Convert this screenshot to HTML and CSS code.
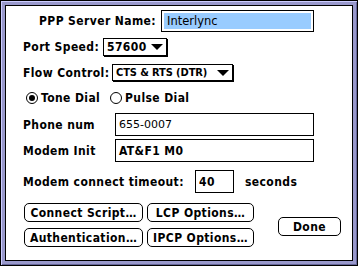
FILE: index.html
```html
<!DOCTYPE html>
<html lang="en">
<head>
    <meta charset="UTF-8">
    <title>PPP Configuration</title>
    <link rel="stylesheet" href="styles.css">
</head>
<body>
    <div class="dialog">
        <div class="panel">
            <!-- Server name -->
            <div class="row server-row">
                <span class="label server-label">PPP Server Name:</span>
                <div class="field server-field"><span class="sel">Interlync</span></div>
            </div>

            <!-- Popups -->
            <div class="row speed-row">
                <span class="label speed-label">Port Speed:</span>
                <div class="popup speed-popup"><span>57600</span><span class="arrow"></span></div>
            </div>
            <div class="row flow-row">
                <span class="label flow-label">Flow Control:</span>
                <div class="popup flow-popup"><span class="flow-text">CTS &amp; RTS (DTR)</span><span class="arrow"></span></div>
            </div>

            <!-- Dial mode -->
            <div class="row radio-row">
                <div class="radio tone"><span class="dot on"></span><span>Tone Dial</span></div>
                <div class="radio"><span class="dot"></span><span>Pulse Dial</span></div>
            </div>

            <!-- Text fields -->
            <div class="row phone-row">
                <span class="label field-label">Phone num</span>
                <div class="field wide-field plain">655-0007</div>
            </div>
            <div class="row init-row">
                <span class="label field-label">Modem Init</span>
                <div class="field wide-field">AT&amp;F1 M0</div>
            </div>
            <div class="row timeout-row">
                <span class="label timeout-label">Modem connect timeout:</span>
                <div class="field timeout-field">40</div>
                <span class="label seconds">seconds</span>
            </div>

            <!-- Buttons -->
            <div class="button-area">
                <div class="button-grid">
                    <div class="btn btn-left">Connect Script…</div>
                    <div class="btn btn-right">LCP Options…</div>
                    <div class="btn btn-left">Authentication…</div>
                    <div class="btn btn-right">IPCP Options…</div>
                </div>
                <div class="btn btn-done">Done</div>
            </div>
        </div>
    </div>
</body>
</html>
```

FILE: styles.css
```css
* { margin: 0; padding: 0; box-sizing: border-box; }
body { width: 358px; height: 266px; background: #fff; font-family: "DejaVu Sans Condensed", "DejaVu Sans", sans-serif; font-stretch: condensed; font-weight: bold; font-size: 12px; letter-spacing: 0.4px; color: #000; }

/* Window frame */
.dialog { width: 358px; height: 266px; border: 1px solid #000; background: #9999cc; padding: 4px; box-shadow: inset 1px 1px 0 #ccccff, inset -1px -1px 0 #666699; }
.panel { width: 100%; height: 100%; border: 1px solid #000; background: #fff; padding: 4px 0 0 17px; }

/* Rows */
.row { display: flex; align-items: center; }
.label { white-space: nowrap; }
.server-row { height: 22px; }
.server-label { width: 133px; text-align: right; margin-right: 5px; }
.speed-row { height: 18px; margin-top: 6px; }
.speed-label { width: 80px; }
.flow-row { height: 17px; margin-top: 8px; }
.flow-label { width: 89px; }

/* Edit fields */
.field { border: 1px solid #000; background: #fff; height: 23px; display: flex; align-items: center; padding-left: 3px; white-space: nowrap; }
.field.plain { font-family: "DejaVu Sans", sans-serif; font-stretch: normal; font-weight: normal; font-size: 11px; letter-spacing: 0; }
.server-field { width: 153px; height: 22px; padding: 2px; font-family: "DejaVu Sans", sans-serif; font-stretch: normal; font-weight: normal; font-size: 11.5px; letter-spacing: 0; }
.sel { display: flex; align-items: center; width: 100%; height: 100%; background: #99ccff; padding-left: 3px; }

/* Popup menus */
.popup { height: 100%; border: 1px solid #000; box-shadow: 1px 1px 0 #000; display: flex; align-items: center; padding: 0 3px 0 3px; white-space: nowrap; }
.speed-popup { width: 64px; }
.flow-popup { width: 121px; }
.flow-text { font-size: 11px; letter-spacing: -0.1px; }
.arrow { margin-left: auto; flex-shrink: 0; width: 0; height: 0; border-left: 6px solid transparent; border-right: 6px solid transparent; border-top: 6px solid #000; }

/* Radio buttons */
.radio-row { height: 14px; margin-top: 10px; padding-left: 3px; }
.radio { display: flex; align-items: center; gap: 3px; }
.radio.tone { width: 84px; }
.dot { width: 12px; height: 12px; border: 1px solid #000; border-radius: 50%; display: flex; align-items: center; justify-content: center; }
.dot.on::after { content: ""; width: 6px; height: 6px; border-radius: 50%; background: #000; }

/* Text field rows */
.phone-row { margin-top: 8px; }
.init-row { margin-top: 3px; }
.field-label { width: 92px; }
.wide-field { width: 199px; }
.timeout-row { margin-top: 8px; }
.timeout-label { width: 172px; }
.timeout-field { width: 39px; }
.seconds { margin-left: 11px; }

/* Buttons */
.button-area { display: flex; align-items: flex-start; margin-top: 10px; padding-left: 1px; }
.button-grid { display: grid; grid-template-columns: 119px 107px; column-gap: 4px; row-gap: 6px; }
.btn { height: 19px; border: 1px solid #000; border-radius: 5px; display: flex; align-items: center; justify-content: center; white-space: nowrap; }
.btn-done { width: 63px; margin: 14px 0 0 24px; }
```
